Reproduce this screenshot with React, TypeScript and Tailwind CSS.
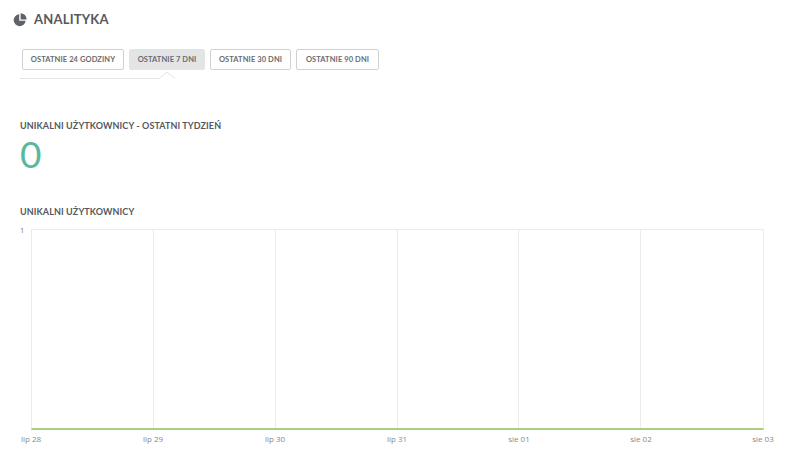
import React from "react";

const tabs = ["OSTATNIE 24 GODZINY", "OSTATNIE 7 DNI", "OSTATNIE 30 DNI", "OSTATNIE 90 DNI"];
const tabW = ["w-[102px]", "w-[76px]", "w-[81px]", "w-[83px]"];
const labels = ["lip 28", "lip 29", "lip 30", "lip 31", "sie 01", "sie 02", "sie 03"];

function PieIcon() {
  return (
    <svg width="14" height="14" viewBox="0 0 14 14" className="block">
      <path d="M6.2 1.2 A6 6 0 1 0 12.6 7.8 L6.2 7.8 Z" fill="#5f6268" />
      <path d="M7.6 0.2 A6 6 0 0 1 13.6 6.4 L7.6 6.4 Z" fill="#5f6268" />
    </svg>
  );
}

export default function App() {
  return (
    <div
      className="w-[790px] h-[455px] bg-white overflow-hidden text-[#55585e]"
      style={{ fontFamily: "Lato, 'Noto Sans', sans-serif" }}
    >
      <div className="flex items-center gap-[7px] pl-[13px] pt-[12px] h-[27px]">
        <PieIcon />
        <span className="text-[13px] font-bold tracking-[0.2px] text-[#55585e] leading-none">ANALITYKA</span>
      </div>

      <div className="flex gap-[5px] pl-[22px] mt-[22px]">
        {tabs.map((t, i) => (
          <div
            key={t}
            className={`${tabW[i]} h-[21px] flex items-center justify-center rounded-[2px] text-[7.5px] font-bold tracking-[0.1px] text-[#686b70] ${
              i === 1 ? "bg-[#e3e4e6] border border-[#e3e4e6]" : "bg-white border border-[#d0d1d3]"
            }`}
          >
            {t}
          </div>
        ))}
      </div>

      <div className="relative ml-[20px] mt-[1px] h-[8px] w-[160px]">
        <svg width="160" height="8" viewBox="0 0 160 8" className="block">
          <path d="M0 7.5 L139 7.5 L147 1 L155 7.5" fill="none" stroke="#e3e4e6" strokeWidth="1" />
        </svg>
      </div>

      <div className="pl-[20px] mt-[42px]">
        <div className="text-[9px] font-bold text-[#55585e] leading-none tracking-[0.1px]">
          UNIKALNI UŻYTKOWNICY - OSTATNI TYDZIEŃ
        </div>
        <div className="text-[37px] font-normal text-[#5ab8a0] leading-none mt-[5px]">0</div>
      </div>

      <div className="pl-[20px] mt-[35px]">
        <div className="text-[9px] font-bold text-[#55585e] leading-none tracking-[0.1px]">
          UNIKALNI UŻYTKOWNICY
        </div>
      </div>

      <div className="flex mt-[11px] pl-[20px]" style={{ fontFamily: "'Open Sans', 'DejaVu Sans', sans-serif" }}>
        <div className="w-[11px] text-[7.5px] text-[#777] leading-none">1</div>
        <div className="flex flex-col">
          <div className="w-[733px] h-[201px] grid grid-cols-6 border-t border-l border-r border-[#ebebeb] border-b-2 border-b-[#a8cf7e] mt-[2px]">
            {[0, 1, 2, 3, 4, 5].map((c) => (
              <div key={c} className={c < 5 ? "border-r border-[#ebebeb]" : ""} />
            ))}
          </div>
          <div className="relative h-[14px] w-[733px]">
            {labels.map((l, i) => (
              <span
                key={l}
                className="absolute top-[5px] -translate-x-1/2 text-[8px] text-[#888] leading-none whitespace-nowrap"
                style={{ left: `${i * 122}px` }}
              >
                {l}
              </span>
            ))}
          </div>
        </div>
      </div>
    </div>
  );
}
